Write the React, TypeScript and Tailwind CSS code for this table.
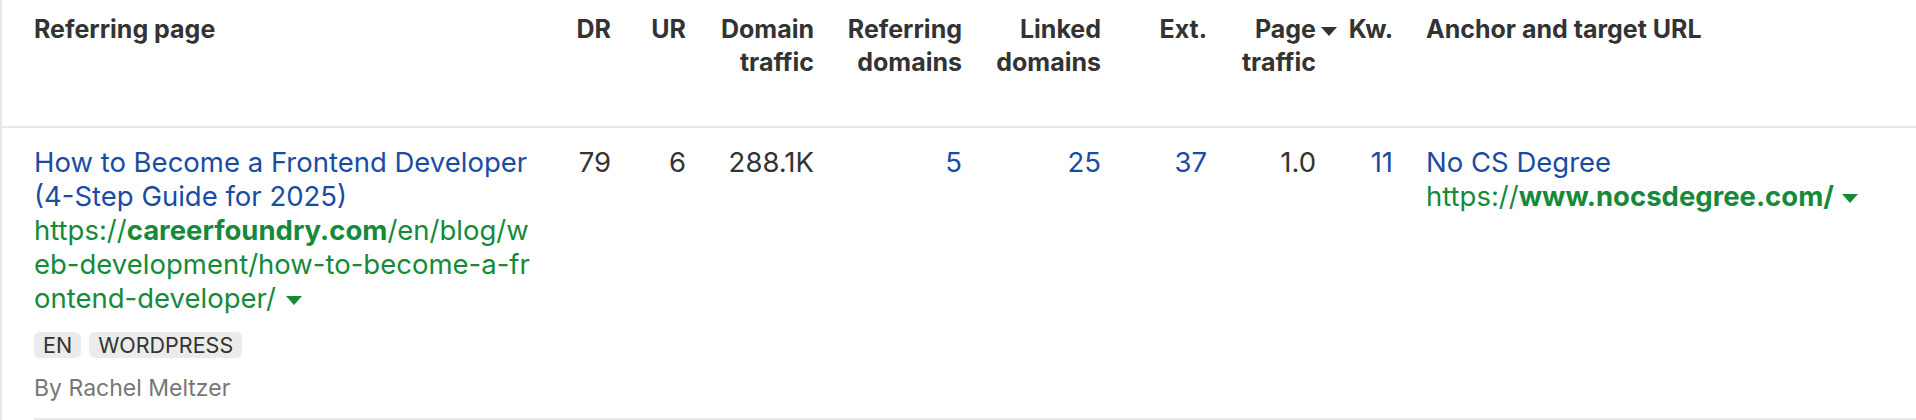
import React from "react";

const cols =
  "grid grid-cols-[502px_75px_75px_128px_148px_139px_106px_109px_77px_1fr]";

function Caret({ className = "" }: { className?: string }) {
  return (
    <svg
      width="16"
      height="9"
      viewBox="0 0 16 9"
      className={className}
      fill="currentColor"
    >
      <path d="M0 0h16L8 9z" />
    </svg>
  );
}

function Tag({ children }: { children: React.ReactNode }) {
  return (
    <span className="h-[26px] px-[9px] rounded-[6px] bg-[#ebebeb] text-[#333] text-[21.5px] leading-[26px]">
      {children}
    </span>
  );
}

export default function App() {
  return (
    <div className="w-[1916px] h-[420px] bg-white border-l-2 border-[#e8e8e8] font-['Inter',sans-serif] overflow-hidden">
      {/* header */}
      <div
        className={`${cols} h-[128px] pl-[32px] pt-[13px] border-b-2 border-[#e8e8e8] text-[25px] leading-[33px] font-bold text-[#333]`}
      >
        <div>Referring page</div>
        <div className="text-right">DR</div>
        <div className="text-right">UR</div>
        <div className="text-right">
          Domain
          <br />
          traffic
        </div>
        <div className="text-right">
          Referring
          <br />
          domains
        </div>
        <div className="text-right">
          Linked
          <br />
          domains
        </div>
        <div className="text-right">Ext.</div>
        <div className="text-right">
          <span className="relative">
            Page
            <Caret className="absolute left-full top-[13px] ml-[5px]" />
          </span>
          <br />
          traffic
        </div>
        <div className="text-right">Kw.</div>
        <div className="pl-[33px]">Anchor and target URL</div>
      </div>

      {/* row */}
      <div
        className={`${cols} ml-[32px] pt-[17px] border-b-2 border-[#e8e8e8] text-[27.5px] leading-[34px] text-[#333] h-[292px]`}
      >
        <div>
          <a className="block text-[#1b4ca3]">
            How to Become a Frontend Developer (4-Step Guide for 2025)
          </a>
          <div className="text-[#168a3a] break-all">
            https://<b className="font-bold">careerfoundry.com</b>
            /en/blog/web-development/how-to-become-a-frontend-developer/{" "}
            <Caret className="inline-block align-middle ml-[2px]" />
          </div>
          <div className="flex gap-[8px] mt-[17px]">
            <Tag>EN</Tag>
            <Tag>WORDPRESS</Tag>
          </div>
          <div className="mt-[14px] text-[23px] leading-[32px] text-[#777]">
            By Rachel Meltzer
          </div>
        </div>
        <div className="text-right">79</div>
        <div className="text-right">6</div>
        <div className="text-right">288.1K</div>
        <div className="text-right text-[#1b4ca3]">5</div>
        <div className="text-right text-[#1b4ca3]">25</div>
        <div className="text-right text-[#1b4ca3]">37</div>
        <div className="text-right">1.0</div>
        <div className="text-right text-[#1b4ca3]">11</div>
        <div className="pl-[33px]">
          <a className="block text-[#1b4ca3]">No CS Degree</a>
          <div className="text-[#168a3a]">
            https://<b className="font-bold">www.nocsdegree.com/</b>{" "}
            <Caret className="inline-block align-middle" />
          </div>
        </div>
      </div>
    </div>
  );
}
